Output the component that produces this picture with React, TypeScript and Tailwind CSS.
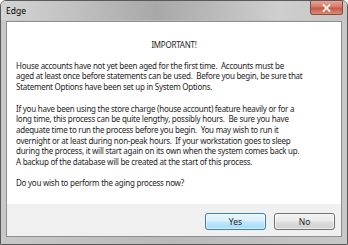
import React from "react";

const lines1 = [
  "House accounts have not yet been aged for the first time.  Accounts must be",
  "aged at least once before statements can be used.  Before you begin, be sure that",
  "Statement Options have been set up in System Options.",
];
const lines2 = [
  "If you have been using the store charge (house account) feature heavily or for a",
  "long time, this process can be quite lengthy, possibly hours.  Be sure you have",
  "adequate time to run the process before you begin.  You may wish to run it",
  "overnight or at least during non-peak hours.  If your workstation goes to sleep",
  "during the process, it will start again on its own when the system comes back up.",
  "A backup of the database will be created at the start of this process.",
];

export default function App() {
  return (
    <div
      className="w-[348px] h-[245px] flex flex-col rounded-t-[6px] border border-[#5a5a5a] overflow-hidden"
      style={{ fontFamily: '"Noto Sans", "Open Sans", sans-serif' }}
    >
      <div className="h-[19px] flex items-start bg-[linear-gradient(90deg,#d4d4d4_0%,#c2c2c2_20%,#a8a8a8_45%,#b8b8b8_60%,#cfcfcf_80%,#c4c4c4_100%)] shrink-0">
        <span className="pl-[5px] pt-[4px] text-[8.5px] leading-[11px] text-black">Edge</span>
        <div className="flex-1" />
        <div className="mr-[4px] w-[33px] h-[14px] rounded-b-[3px] border border-t-0 border-[#8c4b40] bg-[linear-gradient(180deg,#e8a699_0%,#d47a68_45%,#c45a45_55%,#d98c78_100%)] flex items-center justify-center">
          <svg width="9" height="8" viewBox="0 0 9 8">
            <path d="M1.5 1 L7.5 7 M7.5 1 L1.5 7" stroke="#ffffff" strokeWidth="1.8" strokeLinecap="square" opacity="0.9" />
          </svg>
        </div>
      </div>
      <div className="flex-1 flex flex-col bg-[linear-gradient(90deg,#c8c8c8_0%,#b9b9b9_50%,#c8c8c8_100%)] px-[5px] pb-[7px] pt-[1px]">
        <div className="flex-1 flex flex-col border border-[#8e8e8e]">
          <div className="flex-1 bg-white pt-[18px] px-[9px] text-[8px] tracking-[-0.25px] leading-[10.7px] text-[#1e1e1e] whitespace-pre">
            <div className="text-center">IMPORTANT!</div>
            <div className="h-[10px]" />
            {lines1.map((l, i) => (
              <div key={i}>{l}</div>
            ))}
            <div className="h-[10.7px]" />
            {lines2.map((l, i) => (
              <div key={i}>{l}</div>
            ))}
            <div className="h-[10.7px]" />
            <div>Do you wish to perform the aging process now?</div>
          </div>
          <div className="h-[32px] bg-[#f0f0f0] flex justify-end items-start pt-[9px] pr-[6px] gap-[8px] shrink-0">
            <button className="w-[61px] h-[17px] rounded-[3px] border border-[#3c7fb1] bg-[linear-gradient(180deg,#eaf6fd_0%,#d9f0fc_45%,#bee6fd_55%,#a7d9f5_100%)] text-[8.5px] leading-[15px] text-[#1e1e1e] shadow-[inset_0_0_0_1px_#ffffff80]">
              Yes
            </button>
            <button className="w-[61px] h-[17px] rounded-[3px] border border-[#707070] bg-[linear-gradient(180deg,#f2f2f2_0%,#ebebeb_45%,#dddddd_55%,#cfcfcf_100%)] text-[8.5px] leading-[15px] text-[#1e1e1e] shadow-[inset_0_0_0_1px_#ffffffa0]">
              No
            </button>
          </div>
        </div>
      </div>
    </div>
  );
}
